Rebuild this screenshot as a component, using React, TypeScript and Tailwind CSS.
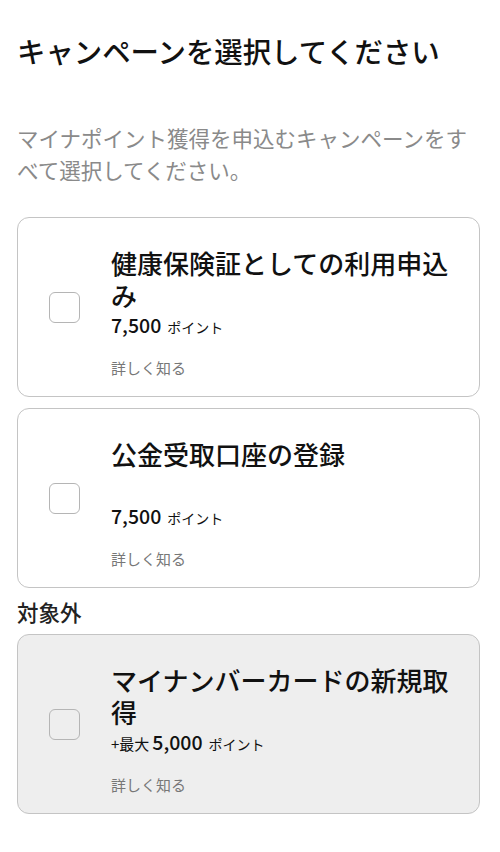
const font = { fontFamily: '"Noto Sans CJK JP", "Noto Sans", sans-serif' };

type Campaign = {
  title: string;
  points: string;
  prefix?: string;
  disabled?: boolean;
};

const campaigns: Campaign[] = [
  { title: "健康保険証としての利用申込み", points: "7,500" },
  { title: "公金受取口座の登録", points: "7,500" },
];

const excluded: Campaign[] = [
  { title: "マイナンバーカードの新規取得", points: "5,000", prefix: "+最大", disabled: true },
];

function CampaignCard({ c }: { c: Campaign }) {
  return (
    <div
      className={
        "flex items-center h-[180px] rounded-[12px] border-[1.5px] border-[#c4c4c4] pl-[31px] pr-4 " +
        (c.disabled ? "bg-[#eeeeee]" : "bg-white")
      }
    >
      <div className="w-[31px] h-[31px] shrink-0 rounded-[6px] border-[1.5px] border-[#b5b5b5]" />
      <div className="ml-[31px] self-stretch flex flex-col pt-[29px]">
        <div className="min-h-[64px] text-[26px] leading-[32px] font-medium text-[#111]">{c.title}</div>
        <div className="flex items-baseline text-[#111] h-[28px] leading-[28px]">
          {c.prefix && <span className="text-[15px] mr-[3px]">{c.prefix}</span>}
          <span className="text-[19.5px] font-medium">{c.points}</span>
          <span className="text-[14px] ml-[6px]">ポイント</span>
        </div>
        <div className="mt-[19px] text-[15px] leading-[20px] text-[#777]">詳しく知る</div>
      </div>
    </div>
  );
}

export default function App() {
  return (
    <div style={font} className="bg-white w-[500px] min-h-[852px] pl-[17px] pr-[20px] pt-[31px]">
      <h1 className="text-[28.4px] leading-[40px] font-medium text-[#111]">
        キャンペーンを選択してください
      </h1>
      <p className="mt-[51px] text-[21.5px] leading-[32px] text-[#8a8a8a]">
        マイナポイント獲得を申込むキャンペーンをすべて選択してください。
      </p>
      <div className="mt-[31px] flex flex-col gap-[11px]">
        {campaigns.map((c) => (
          <CampaignCard key={c.title} c={c} />
        ))}
      </div>
      <h2 className="mt-[10px] mb-[8px] text-[21.5px] leading-[28px] font-medium text-[#222]">対象外</h2>
      <div className="flex flex-col gap-[11px]">
        {excluded.map((c) => (
          <CampaignCard key={c.title} c={c} />
        ))}
      </div>
    </div>
  );
}
